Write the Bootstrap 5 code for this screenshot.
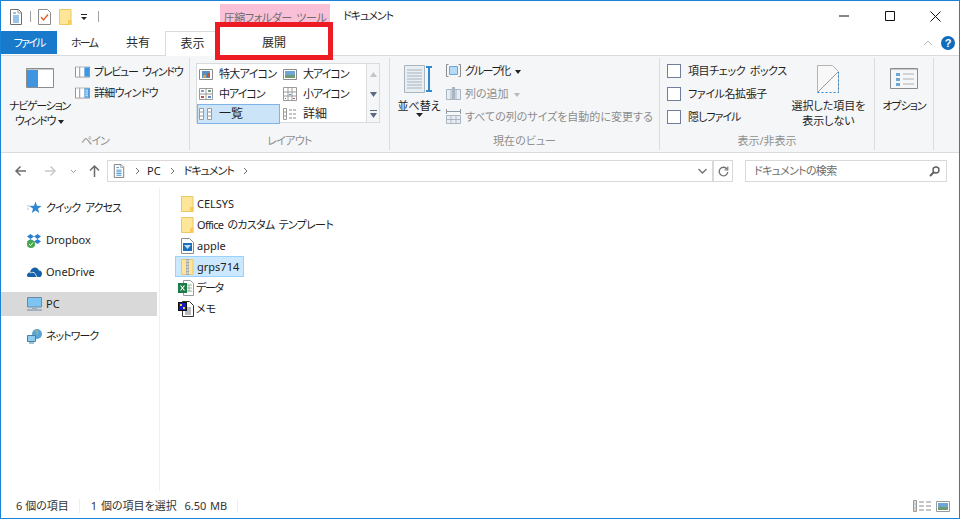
<!DOCTYPE html>
<html lang="ja">
<head>
<meta charset="utf-8">
<title>ドキュメント</title>
<link href="https://cdn.jsdelivr.net/npm/bootstrap@5.3.0/dist/css/bootstrap.min.css" rel="stylesheet">
<style>
html,body{margin:0;background:#fff;overflow:hidden}
body{font-family:"Noto Sans","Noto Sans CJK JP",sans-serif;font-size:11px;line-height:16px;color:#1e1e1e;font-feature-settings:"palt"}
svg{display:block;flex:none}
.t1{letter-spacing:-.4px;word-spacing:2px}.t2{letter-spacing:-.7px;word-spacing:2px}.t3{letter-spacing:-1px;word-spacing:3px}.t4{letter-spacing:-1.3px;word-spacing:3px}.t5{letter-spacing:-1.8px}
.kj{font-size:12px}
.tri{display:inline-block;width:0;height:0;border:3px solid transparent;border-top:4px solid #222;border-bottom:0;vertical-align:middle;margin-left:3px}
.tri-g{border-top-color:#b8b8b8}
.win{width:960px;height:519px;border:1px solid #1883d7;position:relative;background:#fff;overflow:hidden}
.tbar{height:30px}
.qat{padding:8px 0 0 8px;width:219px}
.ctx{width:110px;height:27px;margin-top:3px;background:#fac0d8;color:#6d6d6d;text-align:center;padding-top:6px;white-space:nowrap}
.doc-title{margin-left:13px;padding-top:7px}
.wc{margin-left:auto;width:120px;height:30px;padding:0 18px 0 0}
.tabs{height:24px;position:relative}
.tb{height:24px;text-align:center;padding-top:4px;color:#2b2b2b}
.tb-file{width:56px;background:#1979ca;color:#fff;height:23px}
.tb-n{width:54px}
.tb-a{width:55px;background:#fff;border:1px solid #dadbdc;border-bottom:0;height:25px;position:relative;z-index:2}
.tb-x{width:110px}
.tr{margin-left:auto;padding:5px 4px 0 0;gap:8px}
.rib{height:98px;background:#f5f6f7;border-top:1px solid #dadbdc;border-bottom:1px solid #dadbdc;padding-top:2px}
.grp{height:92px;border-right:1px solid #dadbdc;position:relative;flex:none}
.grp-l{position:absolute;left:0;right:0;bottom:1px;text-align:center;color:#8f8f8f;line-height:16px}
.g1{width:189px;padding:3px 0 0 8px}.g2{width:200px;padding:5px 0 0 6px}.g3{width:270px;padding:1px 0 0 7px}.g4{width:215px;padding:1px 0 0 7px}.g5{width:59px;padding:10px 0 0 0}
.lg{line-height:15px;text-align:center;white-space:nowrap}
.sm{height:21px;gap:4px;white-space:nowrap}
.sm3{height:23px}
.dis{color:#8d8d8d}
.gal{width:184px;height:60px;border:1px solid #dadbdc;background:#fff}
.gal-c{width:169px;flex:none;display:grid;grid-template-columns:84px 85px;grid-auto-rows:20px}
.gi{gap:6px;padding-left:2px;white-space:nowrap}
.gi.on{background:#cce4f7;outline:1px solid #7eb4ea;outline-offset:-1px;margin-right:1px}
.gal-s{border-left:1px solid #dadbdc;background:#f5f6f7}
.gs{height:20px}
.cb{width:14px;height:14px;border:1px solid #707e9b;background:#fff}
.addr{height:35px;padding:7px 0 0 13px}
.abox{height:22px;border:1px solid #d9d9d9;width:606px;margin-left:6px;padding-left:5px}
.rbox{height:22px;width:20px;border:1px solid #d9d9d9;border-left:1px solid #d9d9d9}
.sbox{height:22px;width:202px;border:1px solid #d9d9d9;margin-left:12px;padding:0 6px 0 8px;color:#6d6d6d}
.main{height:303px}
.side{width:159px;border-right:1px solid #f0f0f0;padding-top:8px}
.si{height:24px;padding-left:26px;gap:4px;margin-bottom:8px;width:156px;white-space:nowrap}
.si.on{background:#d9d9d9}
.files{padding:5px 0 0 15px}
.fi{height:21px;width:max-content;gap:3px;padding:0 4px 0 5px;border:1px solid transparent;white-space:nowrap}
.fi.on{background:#cce8ff;border-color:#99d1ff}
.fi-w{padding-left:2px;gap:1px}
.stat{height:27px;padding:3px 9px 0 15px;color:#333;position:relative}
.stat-sel{word-spacing:1px}
.sep{width:1px;height:14px;background:#eee}
.redbox{position:absolute;left:214px;top:21px;width:118px;height:38px;border:5px solid #ed1c24;background:#fff;text-align:center;padding-top:8px;color:#2b2b2b;z-index:3}
</style>
</head>
<body>
<svg width="0" height="0" style="position:absolute">
<defs>
<symbol id="doc" viewBox="0 0 14 16"><path d="M1.5.5h8l3 3v12h-11z" fill="#fff" stroke="#6e6e6e"/><path d="M4 4h3M4 7h6M4 9h6M4 11h6M4 13h6" stroke="#2f87d0"/><path d="M9 1v3h3" fill="none" stroke="#9a9a9a"/></symbol>
<symbol id="folder" viewBox="0 0 13 16"><path d="M.5.5h11.500v15H.5z" fill="#fde698" stroke="#e9c867"/><path d="M9 16V11h3.500v5z" fill="#f5cc5a"/></symbol>
<symbol id="pane" viewBox="0 0 16 12"><path d="M.5.5h15v11H.5z" fill="#fff" stroke="#8c8c8c"/></symbol>
</defs>
</svg>
<div class="win">
  <div class="tbar d-flex">
    <div class="qat d-flex align-items-start">
      <svg width="14" height="16" class="me-1"><use href="#doc"/></svg>
      <div style="width:1px;height:11px;background:#a0a0a0;margin:2px 7px 0 3px"></div>
      <svg width="13" height="16" viewBox="0 0 13 16" class="me-2"><path d="M.5.5h9l3 3v12H.5z" fill="#fff" stroke="#8c8c8c"/><path d="M3 8l2.500 3L10 5.500" fill="none" stroke="#e05a2b" stroke-width="1.300"/></svg>
      <svg width="13" height="16" class="me-2"><use href="#folder"/></svg>
      <svg width="8" height="16" viewBox="0 0 8 16" class="me-2"><path d="M1 5.500h6" stroke="#222"/><path d="M1 8h6l-3 3z" fill="#222"/></svg>
      <div style="width:1px;height:11px;background:#a0a0a0;margin:2px 0 0 2px"></div>
    </div>
    <div class="ctx t1">圧縮フォルダー ツール</div>
    <div class="doc-title t3">ドキュメント</div>
    <div class="wc ms-auto d-flex align-items-center justify-content-between">
      <svg width="10" height="10" viewBox="0 0 10 10"><path d="M0 5h10" stroke="#111"/></svg>
      <svg width="10" height="10" viewBox="0 0 10 10" style="margin-left:35px"><path d="M.5.5h9v9h-9z" fill="none" stroke="#111"/></svg>
      <svg width="11" height="11" viewBox="0 0 11 11" style="margin-left:35px"><path d="M.5.5l10 10M10.500.5l-10 10" stroke="#111"/></svg>
    </div>
  </div>
  <div class="tabs d-flex">
    <div class="tb tb-file t5">ファイル</div>
    <div class="tb tb-n t5">ホーム</div>
    <div class="tb tb-n kj">共有</div>
    <div class="tb tb-a kj">表示</div>
    <div class="tb tb-x kj">展開</div>
    <div class="tr d-flex ms-auto">
      <svg width="10" height="14" viewBox="0 0 10 14"><path d="M1 9l4-4 4 4" fill="none" stroke="#b8b8b8"/></svg>
      <svg width="14" height="14" viewBox="0 0 14 14"><circle cx="7" cy="7" r="7" fill="#0f6cbd"/><text x="7" y="11" text-anchor="middle" font-size="11" font-weight="700" fill="#fff" font-family="Liberation Sans">?</text></svg>
    </div>
  </div>
  <div class="rib d-flex">
    <div class="grp g1 d-flex">
      <div class="lg" style="width:61px">
        <svg width="28" height="20" viewBox="0 0 28 20" style="margin:7px auto 10px"><path d="M.5.5h27v19H.5z" fill="#fff" stroke="#8c8c8c"/><path d="M1 1h11v18H1z" fill="#3f95df"/><path d="M1 1h26v1H1z" fill="#c9c9c9"/></svg>
        <span class="t4">ナビゲーション</span><br><span class="t4">ウィンドウ</span><span class="tri"></span>
      </div>
      <div style="margin-left:5px">
        <div class="sm d-flex align-items-center t4"><svg width="15" height="12" viewBox="0 0 16 12"><use href="#pane"/><path d="M10 1h5v10h-5z" fill="#3f95df"/><path d="M5 1v10" stroke="#8c8c8c"/></svg>プレビュー ウィンドウ</div>
        <div class="sm d-flex align-items-center t2"><svg width="15" height="12" viewBox="0 0 16 12"><use href="#pane"/><path d="M10 1h5v10h-5z" fill="#3f95df"/><path d="M11 3h3M11 5h3M11 7h3M11 9h3" stroke="#fff"/><path d="M5 1v10" stroke="#8c8c8c"/></svg>詳細ウィンドウ</div>
      </div>
      <div class="grp-l t3">ペイン</div>
    </div>
    <div class="grp g2">
      <div class="gal d-flex">
        <div class="gal-c">
          <div class="gi d-flex align-items-center t2"><svg width="14" height="11" viewBox="0 0 14 11"><path d="M.5.5h13v10H.5z" fill="#fff" stroke="#8c8c8c"/><path d="M3 2h8v7H3z" fill="#5a8fc0"/><path d="M4 6h3v3H4z" fill="#d9a13b"/><path d="M8 4h3v4H8z" fill="#c2533d"/></svg>特大アイコン</div>
          <div class="gi d-flex align-items-center t3"><svg width="14" height="11" viewBox="0 0 14 11"><path d="M.5.5h13v10H.5z" fill="#fff" stroke="#8c8c8c"/><path d="M2 2h10v4H2z" fill="#6ea6d6"/><path d="M2 6h10v3H2z" fill="#6f9a74"/></svg>大アイコン</div>
          <div class="gi d-flex align-items-center t3"><svg width="14" height="12" viewBox="0 0 14 12"><path d="M.5.500h13v11H.5zM.5 6h13M7 .5v11" fill="#fff" stroke="#9a9a9a"/><path d="M2 2h3v2H2z" fill="#6ea6d6"/><path d="M9 2h3v2H9z" fill="#6f9a74"/><path d="M2 8h3v2H2z" fill="#c2533d"/><path d="M9 8h3v2H9z" fill="#5a8fc0"/></svg>中アイコン</div>
          <div class="gi d-flex align-items-center t3"><svg width="14" height="14" viewBox="0 0 14 14"><path d="M.5.5h13v13H.5zM.5 5h13M.5 9h13M5 .5v13M9 .5v13" fill="#fff" stroke="#9a9a9a"/><path d="M2 11h1v1H2zM10 11h2v1h-2z" fill="#c2533d"/><path d="M6 7h2v1H6z" fill="#5a8fc0"/></svg>小アイコン</div>
          <div class="gi on d-flex align-items-center kj"><svg width="14" height="12" viewBox="0 0 14 12"><path d="M.5.500h4v11h-4zM.5 4h4M.5 8h4M8.500.5h4v11h-4zM8.500 4h4M8.500 8h4" fill="#fff" stroke="#9a9a9a"/></svg>一覧</div>
          <div class="gi d-flex align-items-center kj"><svg width="14" height="12" viewBox="0 0 14 12"><path d="M.5.500h3v11h-3zM.5 4h3M.5 8h3" fill="#fff" stroke="#9a9a9a"/><path d="M6 2h3M10 2h3M6 6h3M10 6h3M6 10h3M10 10h3" stroke="#8c8c8c"/></svg>詳細</div>
        </div>
        <div class="gal-s flex-grow-1">
          <div class="gs d-flex align-items-center justify-content-center"><svg width="7" height="5" viewBox="0 0 7 5"><path d="M3.500 0L7 5H0z" fill="#c4c4c4"/></svg></div>
          <div class="gs d-flex align-items-center justify-content-center"><svg width="7" height="5" viewBox="0 0 7 5"><path d="M0 0h7L3.500 5z" fill="#5a6a80"/></svg></div>
          <div class="gs d-flex align-items-center justify-content-center"><svg width="7" height="8" viewBox="0 0 7 8"><path d="M0 .5h7" stroke="#5a6a80"/><path d="M0 3h7L3.500 8z" fill="#5a6a80"/></svg></div>
        </div>
      </div>
      <div class="grp-l t2">レイアウト</div>
    </div>
    <div class="grp g3 d-flex">
      <div class="lg" style="width:44px">
        <svg width="30" height="28" viewBox="0 0 30 28" style="margin:6px auto 5px"><path d="M.5.5h20v27H.5z" fill="#e9eef2" stroke="#a8b4be"/><path d="M3 5h15M3 8h15M3 11h15M3 14h15M3 17h15M3 20h15M3 23h15" stroke="#a8b4be"/><path d="M25 3v22" stroke="#2f87d0" stroke-width="2"/><path d="M22 2h6M22 26h6" stroke="#2f87d0" stroke-width="2"/></svg>
        並べ替え
        <svg width="7" height="4" viewBox="0 0 7 4" style="margin:0 auto"><path d="M0 0h7L3.500 4z" fill="#222"/></svg>
      </div>
      <div style="margin-left:5px">
        <div class="sm sm3 d-flex align-items-center"><svg width="15" height="13" viewBox="0 0 15 13"><path d="M2.500.5H.5v12h2M12.500.5h2v12h-2" fill="none" stroke="#8c8c8c"/><path d="M3.500 2.500h8v8h-8z" fill="#b5dcf7" stroke="#6ea6d6"/></svg><span><span class="t4">グループ化</span><span class="tri" style="margin-left:5px"></span></span></div>
        <div class="sm sm3 dis d-flex align-items-center"><svg width="15" height="13" viewBox="0 0 15 13"><path d="M.5 2.500h14v10H.5zM5 2.500v10M10 2.500v10" fill="#e8edf2" stroke="#aab6c4"/><path d="M6 0h3v12H6z" fill="#aab6c4"/></svg><span>列の追加<span class="tri tri-g" style="margin-left:5px"></span></span></div>
        <div class="sm sm3 dis d-flex align-items-center"><svg width="15" height="15" viewBox="0 0 15 15"><path d="M.5 6.500h14v8H.5zM.5 10.500h14M5 6.500v8M10 6.500v8" fill="#e8edf2" stroke="#aab6c4"/><path d="M.5 0v5M14.500 0v5M1 2.500h13" stroke="#8f99a8"/></svg>すべての列のサイズを自動的に変更する</div>
      </div>
      <div class="grp-l">現在のビュー</div>
    </div>
    <div class="grp g4 d-flex">
      <div>
        <div class="sm sm3 d-flex align-items-center t1" style="gap:7px"><div class="cb"></div>項目チェック ボックス</div>
        <div class="sm sm3 d-flex align-items-center t1" style="gap:7px"><div class="cb"></div>ファイル名拡張子</div>
        <div class="sm sm3 d-flex align-items-center t3" style="gap:7px"><div class="cb"></div>隠しファイル</div>
      </div>
      <div class="lg" style="width:84px;margin-left:auto;margin-right:4px">
        <svg width="22" height="28" viewBox="0 0 22 28" style="margin:6px auto 5px"><path d="M.5 27.500V.5h15l6 6v21" fill="#f8f8f8" stroke="#b4b4b4"/><path d="M.5 27.500h21V7" fill="none" stroke="#2f87d0" stroke-dasharray="2 2"/><path d="M1 27L21 7" stroke="#9a9a9a"/></svg>
        選択した項目を<br>表示しない
      </div>
      <div class="grp-l">表示/非表示</div>
    </div>
    <div class="grp g5 lg">
      <svg width="28" height="21" viewBox="0 0 28 21" style="margin:0 auto 9px"><path d="M.5.5h27v20H.5z" fill="#f4f6f8" stroke="#8c8c8c"/><path d="M1 1h26v1H1z" fill="#c9c9c9"/><path d="M6 5h4v3H6zM6 10h4v3H6zM6 15h4v3H6z" fill="#6ea6d6"/><path d="M13 6h11M13 11h11M13 16h11" stroke="#b0b0b0"/></svg>
      <span class="t3">オプション</span>
    </div>
  </div>
  <div class="addr d-flex">
    <svg width="13" height="22" viewBox="0 0 13 22" style="margin-right:17px"><path d="M12 11H2M6.500 6.500L2 11l4.500 4.500" fill="none" stroke="#6b6b6b" stroke-width="1.500"/></svg>
    <svg width="13" height="22" viewBox="0 0 13 22" style="margin-right:13px"><path d="M1 11h10M6.500 6.500L11 11l-4.500 4.500" fill="none" stroke="#c9c9c9" stroke-width="1.500"/></svg>
    <svg width="7" height="22" viewBox="0 0 7 22" style="margin-right:11px"><path d="M1 10l2.500 2.500L6 10" fill="none" stroke="#9a9a9a"/></svg>
    <svg width="13" height="22" viewBox="0 0 13 22"><path d="M6.500 17V6M2 10.500L6.500 6l4.500 4.500" fill="none" stroke="#6b6b6b" stroke-width="1.500"/></svg>
    <div class="abox d-flex align-items-center">
      <svg width="12" height="14" style="margin-right:10px"><use href="#doc"/></svg>
      <svg width="5" height="8" viewBox="0 0 5 8" style="margin-right:7px"><path d="M1 1l3 3-3 3" fill="none" stroke="#707070"/></svg>
      <span style="margin-right:9px">PC</span>
      <svg width="5" height="8" viewBox="0 0 5 8" style="margin-right:9px"><path d="M1 1l3 3-3 3" fill="none" stroke="#707070"/></svg>
      <span class="t3" style="margin-right:9px">ドキュメント</span>
      <svg width="5" height="8" viewBox="0 0 5 8"><path d="M1 1l3 3-3 3" fill="none" stroke="#707070"/></svg>
      <svg width="9" height="6" viewBox="0 0 9 6" class="ms-auto" style="margin-right:5px"><path d="M.5 1L4.500 5l4-4" fill="none" stroke="#707070" stroke-width="1.300"/></svg>
    </div>
    <div class="rbox d-flex align-items-center justify-content-center"><svg width="11" height="11" viewBox="0 0 11 11"><path d="M9 3A4.300 4.300 0 1 0 9.800 6" fill="none" stroke="#707070" stroke-width="1.300"/><path d="M9.800.5v3.500H6.500" fill="none" stroke="#707070" stroke-width="1.100"/></svg></div>
    <div class="sbox d-flex align-items-center justify-content-between"><span class="t2">ドキュメントの検索</span><svg width="11" height="11" viewBox="0 0 11 11"><circle cx="7" cy="4" r="3" fill="none" stroke="#5f5f5f" stroke-width="1.400"/><path d="M5 6l-4 4" stroke="#5f5f5f" stroke-width="2"/></svg></div>
  </div>
  <div class="main d-flex">
    <div class="side">
      <div class="si d-flex align-items-center t3"><svg width="15" height="14" viewBox="0 0 15 14"><path d="M8.500.5l1.500 4.200 4.500.2-3.500 2.800 1.200 4.300L8.500 9.500 4.800 12l1.200-4.300L2.500 4.900l4.500-.2z" fill="#2f87d0"/><path d="M0 5h3M0 8h2" stroke="#9cc7ea"/></svg>クイック アクセス</div>
      <div class="si d-flex align-items-center"><svg width="15" height="15" viewBox="0 0 15 15"><path d="M3.500 1L7 3.500 3.500 6 0 3.500zM10.500 1L14 3.500 10.500 6 7 3.500zM3.500 6L7 8.500 3.500 11 0 8.500zM10.500 6L14 8.500 10.500 11 7 8.500z" fill="#2b7fcf"/><circle cx="4" cy="11" r="4" fill="#45a849"/><path d="M2 11l1.500 1.500L6 9.500" fill="none" stroke="#fff"/></svg>Dropbox</div>
      <div class="si d-flex align-items-center"><svg width="15" height="10" viewBox="0 0 15 10"><path d="M0 8.500C0 6 2 5.500 3 5.500 3.500 2 6 .5 8 .5c2 0 3.500 1.500 4 3 2 0 3 1.500 3 3S14 10 13 10H2C1 10 0 9.500 0 8.500z" fill="#1560a8"/><path d="M3 6c2-1 4-1 5 .5l2 3.500" fill="none" stroke="#fff" stroke-width=".8"/></svg>OneDrive</div>
      <div class="si on d-flex align-items-center"><svg width="15" height="14" viewBox="0 0 15 14"><path d="M.5.5h14v9.500H.5z" fill="#7cc4f2" stroke="#6f8aa0"/><path d="M5 11h5v1H5z" fill="#9ab0c2"/><path d="M0 13h15" stroke="#6f8aa0"/></svg>PC</div>
      <div class="si d-flex align-items-center t3"><svg width="15" height="15" viewBox="0 0 15 15"><circle cx="10" cy="5" r="5" fill="#5aa3d8"/><path d="M8 1c2 1 3 3 2 5" fill="none" stroke="#8fb77d" stroke-width="1.500"/><path d="M.5 6.500h8v6h-8z" fill="#8fcdf0" stroke="#4a7fa5"/><path d="M2 14h5" stroke="#4a7fa5"/></svg>ネットワーク</div>
    </div>
    <div class="files flex-grow-1">
      <div class="fi d-flex align-items-center"><svg width="13" height="16"><use href="#folder"/></svg>CELSYS</div>
      <div class="fi d-flex align-items-center t2"><svg width="13" height="16"><use href="#folder"/></svg>Office のカスタム テンプレート</div>
      <div class="fi d-flex align-items-center"><svg width="13" height="16" viewBox="0 0 13 16"><path d="M.5.5h8l4 4v11H.5z" fill="#fff" stroke="#8c8c8c"/><path d="M2 5h9v8H2z" fill="#1c6fb8"/><path d="M3 7h7l-3.500 4z" fill="#bfe0f5"/></svg>apple</div>
      <div class="fi on d-flex align-items-center"><svg width="13" height="16" viewBox="0 0 13 16"><path d="M.5.5h11.500v15H.5z" fill="#fde698" stroke="#e9c867"/><path d="M5 0h3v16H5z" fill="#a8a8a8"/><path d="M5.500 2h2M5.500 5h2M5.500 8h2M5.500 11h2M5.500 14h2" stroke="#fff"/></svg>grps714</div>
      <div class="fi fi-w d-flex align-items-center t4"><svg width="16" height="16" viewBox="0 0 16 16"><path d="M5.500.5h7l3 3v12h-10z" fill="#fff" stroke="#9a9a9a"/><path d="M9 5h5M9 8h5M9 11h5M11 5v7" stroke="#8cb89a"/><path d="M0 3h9v10H0z" fill="#1d7a45"/><path d="M2.500 5.500l4 5M6.500 5.500l-4 5" stroke="#fff" stroke-width="1.200"/></svg><span style="margin-left:1px">データ</span></div>
      <div class="fi fi-w d-flex align-items-center"><svg width="16" height="16" viewBox="0 0 16 16"><path d="M4.500.5h7l4 4v11h-11z" fill="#fff" stroke="#333"/><path d="M7 7h6M7 9h6M7 11h6M7 13h6" stroke="#777"/><path d="M0 1h9v9H0z" fill="#111"/><path d="M1 2h7v7H1z" fill="#1818c0"/><path d="M2 3h2v2H2zM5 6h2v2H5z" fill="#e8d830"/></svg><span style="margin-left:1px">メモ</span></div>
    </div>
  </div>
  <div class="stat d-flex align-items-center">
    <span>6 個の項目</span>
    <div class="sep" style="margin:0 11px 0 10px"></div>
    <span class="stat-sel">1 個の項目を選択&nbsp;&nbsp;6.50 MB</span>
    <div class="sep" style="margin-left:10px"></div>
    <div class="ms-auto d-flex align-items-center" style="gap:4px">
      <svg width="19" height="12" viewBox="0 0 19 12"><path d="M.5.500h3v11h-3zM.5 4h3M.5 8h3" fill="#fff" stroke="#9a9a9a"/><path d="M1.500 2h1" stroke="#777"/><path d="M1.500 6h1" stroke="#2f87d0"/><path d="M1.500 10h1" stroke="#d0342c"/><path d="M6 2h5M13 2h5M6 6h5M13 6h5M6 10h5M13 10h5" stroke="#8c8c8c"/></svg>
      <svg width="14" height="11" viewBox="0 0 14 11"><path d="M.5.500h13v10H.5z" fill="#fff" stroke="#9a9a9a"/><path d="M2 2h10v4H2z" fill="#6ea6d6"/><path d="M2 6h10v3H2z" fill="#6f9a74"/></svg>
    </div>
  </div>
  <div class="redbox kj">展開</div>
</div>
</body>
</html>
